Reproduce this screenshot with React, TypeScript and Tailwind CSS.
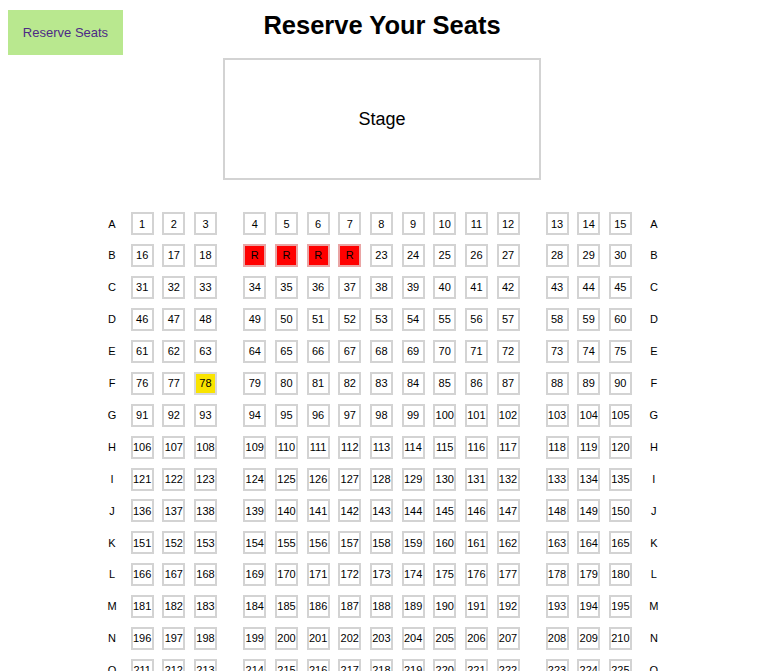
import React from "react";

const ROWS = "ABCDEFGHIJKLMNO".split("");
const RESERVED = new Set([19, 20, 21, 22]);
const SELECTED = new Set([78]);

function Seat({ n }: { n: number }) {
  if (RESERVED.has(n)) {
    return (
      <div className="w-[23px] h-[23px] shrink-0 border-2 border-[#e9a5a5] bg-[#ff0000] flex items-center justify-center text-[11px] text-black">
        R
      </div>
    );
  }
  if (SELECTED.has(n)) {
    return (
      <div className="w-[23px] h-[23px] shrink-0 border-2 border-[#d9d9d9] bg-[#f9e400] flex items-center justify-center text-[11px] text-black">
        {n}
      </div>
    );
  }
  return (
    <div className="w-[23px] h-[23px] shrink-0 border-2 border-[#d3d3d3] bg-white flex items-center justify-center text-[11px] text-black">
      {n}
    </div>
  );
}

function Row({ label, index }: { label: string; index: number }) {
  const base = index * 15;
  const g1 = [1, 2, 3].map((i) => base + i);
  const g2 = [4, 5, 6, 7, 8, 9, 10, 11, 12].map((i) => base + i);
  const g3 = [13, 14, 15].map((i) => base + i);
  return (
    <div className="flex items-center h-[31.92px]">
      <div className="w-[22px] text-center text-[11px] mr-[7.67px]">{label}</div>
      <div className="flex gap-[8.67px]">
        {g1.map((n) => (
          <Seat key={n} n={n} />
        ))}
      </div>
      <div className="flex gap-[8.67px] ml-[26.33px]">
        {g2.map((n) => (
          <Seat key={n} n={n} />
        ))}
      </div>
      <div className="flex gap-[8.67px] ml-[26px]">
        {g3.map((n) => (
          <Seat key={n} n={n} />
        ))}
      </div>
      <div className="w-[22px] text-center text-[11px] ml-[11px]">{label}</div>
    </div>
  );
}

export default function App() {
  return (
    <div
      className="relative w-[771px] min-h-[671px] bg-white text-black"
      style={{ fontFamily: '"Liberation Sans", Arial, sans-serif' }}
    >
      <button className="absolute left-[8px] top-[10px] w-[115px] h-[45px] bg-[#b9e88f] text-[#4d2a86] text-[13px] flex items-center justify-center">
        Reserve Seats
      </button>
      <div className="w-[764px] flex flex-col items-center">
        <h1 className="mt-[11px] text-[25.5px] font-bold leading-[1.15]">Reserve Your Seats</h1>
        <div className="mt-[18px] w-[318px] h-[122px] border-2 border-[#d3d3d3] flex items-center justify-center text-[18px] pt-[1px]">
          Stage
        </div>
      </div>
      <div className="ml-[101px] mt-[27.5px] flex flex-col pb-[20px]">
        {ROWS.map((r, i) => (
          <Row key={r} label={r} index={i} />
        ))}
      </div>
    </div>
  );
}
